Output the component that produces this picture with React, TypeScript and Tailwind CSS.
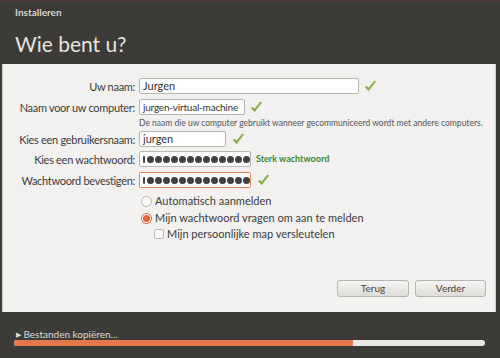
import React from "react";

const Check = () => (
  <svg width="13" height="13" viewBox="0 0 13 13" className="shrink-0">
    <path
      d="M1.5 7.2 L4.6 10.6 L11.6 1.6 L10.4 1 L4.5 8.3 L2.6 6.1 Z"
      fill="#8fb54e"
      stroke="#7da43f"
      strokeWidth="0.8"
      strokeLinejoin="round"
    />
  </svg>
);

const Dots = ({ count }: { count: number }) => (
  <div className="flex items-center gap-[1px]">
    <span className="w-[2px] h-[7px] bg-[#444] rounded-sm mr-[1px]" />
    {Array.from({ length: count }).map((_, i) => (
      <span key={i} className="w-[7px] h-[7px] rounded-full bg-[#3f3f3f]" />
    ))}
  </div>
);

const Label = ({ children }: { children: React.ReactNode }) => (
  <div className="w-[133px] shrink-0 text-right pr-[1px] text-[11px] tracking-[-0.3px] text-[#3c3c3c] leading-none whitespace-nowrap">
    {children}
  </div>
);

const Field = ({
  width,
  children,
  orange,
}: {
  width: string;
  children: React.ReactNode;
  orange?: boolean;
}) => (
  <div
    className={`ml-[3px] h-[16px] ${width} shrink-0 flex items-center px-[3px] bg-white rounded-[2px] border text-[11px] text-[#333] whitespace-nowrap overflow-hidden ${
      orange ? "border-[#e08a5c]" : "border-[#b9b6b0]"
    }`}
  >
    {children}
  </div>
);

export default function App() {
  return (
    <div
      className="w-[500px] h-[358px] bg-[#3c3b37] flex flex-col overflow-hidden"
      style={{ fontFamily: "Lato, 'DejaVu Sans', sans-serif" }}
    >
      <div className="h-[64px] shrink-0 border-t-2 border-[#4a3a3a] pl-[15px]">
        <div className="text-[10px] font-bold text-[#d8d6d0] mt-[3px] leading-[14px]">Installeren</div>
        <div className="text-[21px] text-[#e6e4df] mt-[13px] leading-[24px]">Wie bent u?</div>
      </div>

      <div className="h-[248px] shrink-0 ml-[2px] mr-[4px] bg-[#f2f1ef] border-l border-r border-[#cfcdc9] flex flex-col relative">
        <div className="flex items-center mt-[14px]">
          <Label>Uw naam:</Label>
          <Field width="w-[220px]">Jurgen</Field>
          <div className="ml-[5px]"><Check /></div>
        </div>

        <div className="flex items-center mt-[5px]">
          <Label>Naam voor uw computer:</Label>
          <Field width="w-[106px]">
            <span className="text-[10px] tracking-[-0.2px]">jurgen-virtual-machine</span>
          </Field>
          <div className="ml-[5px]"><Check /></div>
        </div>

        <div className="pl-[136px] mt-[2px] text-[8.5px] text-[#555] leading-[12px] whitespace-nowrap">
          De naam die uw computer gebruikt wanneer gecommuniceerd wordt met andere computers.
        </div>

        <div className="flex items-center mt-[2px]">
          <Label>Kies een gebruikersnaam:</Label>
          <Field width="w-[87px]">jurgen</Field>
          <div className="ml-[6px]"><Check /></div>
        </div>

        <div className="flex items-center mt-[4px]">
          <Label>Kies een wachtwoord:</Label>
          <Field width="w-[112px]">
            <Dots count={13} />
          </Field>
          <div className="ml-[5px] text-[9px] font-bold text-[#3b8a2c] whitespace-nowrap">Sterk wachtwoord</div>
        </div>

        <div className="flex items-center mt-[5px]">
          <Label>Wachtwoord bevestigen:</Label>
          <Field width="w-[112px]" orange>
            <Dots count={13} />
          </Field>
          <div className="ml-[6px]"><Check /></div>
        </div>

        <div className="flex items-center pl-[138px] mt-[6px] h-[14px]">
          <span className="w-[11px] h-[11px] rounded-full border border-[#b8b5b0] bg-[#fafaf9]" />
          <span className="ml-[3px] text-[11px] text-[#3c3c3c]">Automatisch aanmelden</span>
        </div>

        <div className="flex items-center pl-[138px] mt-[3px] h-[14px]">
          <span className="w-[11px] h-[11px] rounded-full border border-[#c9653a] bg-[#fff] flex items-center justify-center">
            <span className="w-[7px] h-[7px] rounded-full bg-[#e2633a]" />
          </span>
          <span className="ml-[3px] text-[11px] text-[#3c3c3c]">Mijn wachtwoord vragen om aan te melden</span>
        </div>

        <div className="flex items-center pl-[151px] mt-[2px] h-[14px]">
          <span className="w-[10px] h-[10px] rounded-[2px] border border-[#bdbab5] bg-[#fafaf9]" />
          <span className="ml-[3px] text-[11px] text-[#3c3c3c]">Mijn persoonlijke map versleutelen</span>
        </div>

        <div className="flex justify-end gap-[6px] mt-[39px] mr-[9px]">
          <button className="w-[72px] h-[17px] rounded-[3px] border border-[#b7b4af] bg-gradient-to-b from-[#f6f5f4] to-[#dedcd8] text-[10px] text-[#444]">
            Terug
          </button>
          <button className="w-[71px] h-[17px] rounded-[3px] border border-[#b7b4af] bg-gradient-to-b from-[#f6f5f4] to-[#dedcd8] text-[10px] text-[#444]">
            Verder
          </button>
        </div>
      </div>

      <div className="flex-1 pl-[14px] pr-[15px]">
        <div className="flex items-center mt-[16px] h-[12px] text-[10px] text-[#dcdad5]">
          <span className="text-[7px] ml-[2px] mr-[2px]">▶</span>
          <span>Bestanden kopiëren...</span>
        </div>
        <div className="mt-[0px] h-[6px] w-[471px] rounded-full bg-[#e9e7e3] overflow-hidden">
          <div className="h-full w-[339px] bg-[#e3784e] rounded-l-full" />
        </div>
      </div>
    </div>
  );
}
